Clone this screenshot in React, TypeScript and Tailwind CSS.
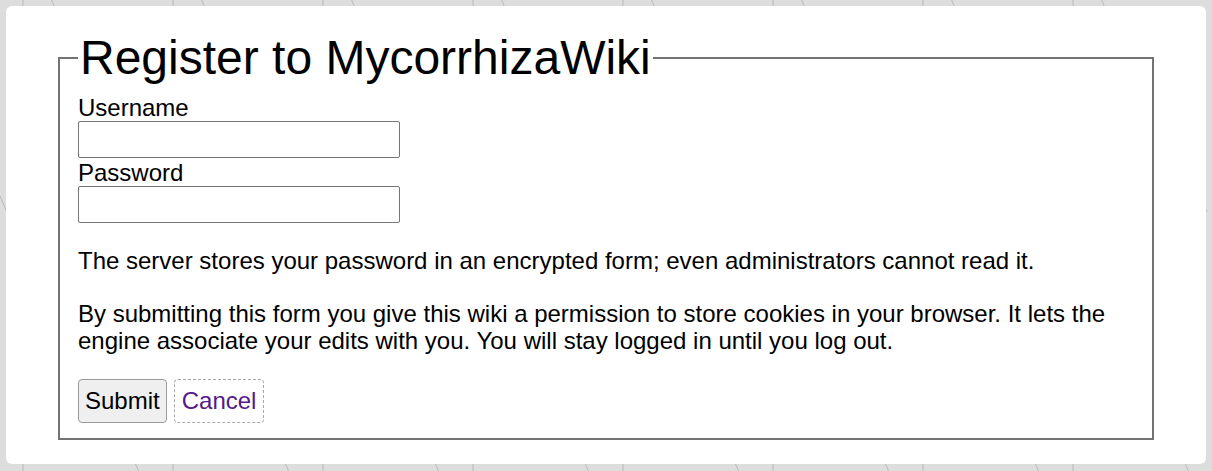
const Backdrop = () => (
  <svg className="absolute inset-0" width="1212" height="471" aria-hidden="true">
    <defs>
      <pattern id="web" width="150" height="471" patternUnits="userSpaceOnUse" x="0" y="0">
        <line x1="23" y1="0" x2="23" y2="471" stroke="#b9b9b9" strokeWidth="1" />
        <line x1="50" y1="-4" x2="55" y2="8" stroke="#b9b9b9" strokeWidth="1" />
        <line x1="132" y1="456" x2="139" y2="472" stroke="#b9b9b9" strokeWidth="1" />
        <line x1="0" y1="196" x2="7" y2="212" stroke="#b9b9b9" strokeWidth="1" />
      </pattern>
    </defs>
    <rect width="1212" height="471" fill="url(#web)" />
  </svg>
);

export default function App() {
  return (
    <div
      className="relative w-[1212px] h-[471px] overflow-hidden bg-[#dddddd] p-[6px] text-[24px] text-black"
      style={{ fontFamily: '"Liberation Sans", Arial, sans-serif' }}
    >
      <Backdrop />
      <main className="relative h-[458px] rounded-[6px] bg-white px-[52px] pt-[24px]">
        <form>
          <fieldset className="border-2 border-solid border-[#737373] px-[18px] pt-[9px] pb-[15px]">
            <legend className="px-[2px] text-[48px] leading-[1.15]">Register to MycorrhizaWiki</legend>
            <label htmlFor="login" className="block h-[27px] leading-[27px]">
              Username
            </label>
            <input
              id="login"
              type="text"
              className="block w-[322px] h-[37px] rounded-[2px] border border-[#767676] bg-white"
            />
            <label htmlFor="password" className="mt-px block h-[27px] leading-[27px]">
              Password
            </label>
            <input
              id="password"
              type="password"
              className="block w-[322px] h-[37px] rounded-[2px] border border-[#767676] bg-white"
            />
            <p className="my-[24px] leading-[1.15]">
              The server stores your password in an encrypted form; even administrators cannot read it.
            </p>
            <p className="mt-[25px] mb-[24px] leading-[1.15]">
              By submitting this form you give this wiki a permission to store cookies in your browser. It lets the
              engine associate your edits with you. You will stay logged in until you log out.
            </p>
            <div className="flex gap-[7px]">
              <button
                type="submit"
                className="rounded-[4px] border border-[#9a9a9a] bg-[#efefef] px-[6px] py-[7px] leading-[1.15]"
              >
                Submit
              </button>
              <a
                href="/"
                className="rounded-[4px] border border-dashed border-[#a8a8a8] px-[7px] py-[7px] leading-[1.15] text-[#551a8b]"
              >
                Cancel
              </a>
            </div>
          </fieldset>
        </form>
      </main>
    </div>
  );
}
